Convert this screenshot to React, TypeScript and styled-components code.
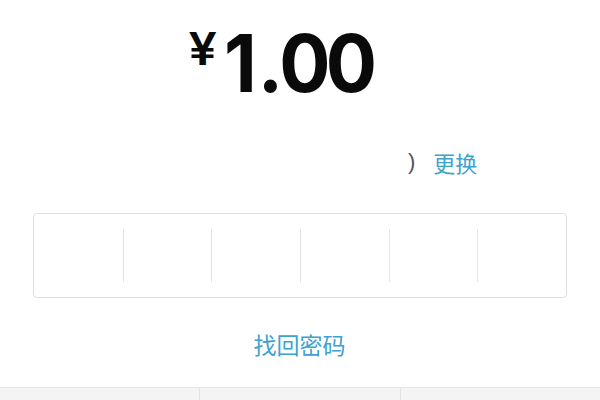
import React from 'react';
import styled, { createGlobalStyle } from 'styled-components';

const GlobalStyle = createGlobalStyle`
  html, body {
    margin: 0;
    padding: 0;
    background: #ffffff;
  }
  body {
    font-family: 'Liberation Sans', 'Noto Sans CJK SC', sans-serif;
  }
`;

const Page = styled.div`
  display: flex;
  flex-direction: column;
  height: 400px;
  overflow: hidden;
  background: #ffffff;
`;

const AmountRow = styled.div`
  display: flex;
  align-items: flex-start;
  padding: 23px 0 0 190px;
  height: 80px;
  color: #0a0a0a;
  font-family: Inter, 'Liberation Sans', sans-serif;
`;

const Yen = styled.span`
  font-size: 45px;
  line-height: 44px;
  font-weight: 600;
  margin-top: 4px;
  margin-right: 9px;
  transform: scaleX(1.12);
`;

const Figure = styled.span`
  display: inline-block;
  font-size: 80px;
  line-height: 80px;
  font-weight: 700;
  letter-spacing: -5px;
  transform: scaleX(0.95);
  transform-origin: left center;
`;

const Dot = styled.span`
  margin: 0 1px 0 6px;
`;

const HintRow = styled.div`
  display: flex;
  align-items: center;
  margin-top: 48px;
  padding-left: 408px;
  height: 22px;
  font-size: 22px;
  line-height: 22px;
`;

const Bracket = styled.span`
  color: #555555;
  margin-right: 18px;
  font-family: 'Liberation Sans', sans-serif;
`;

const Link = styled.span<{ $size?: number }>`
  color: #3ea2cf;
  font-family: 'Noto Sans CJK SC', sans-serif;
  font-size: ${(props) => props.$size ?? 22}px;
`;

const PinBox = styled.div`
  display: grid;
  grid-template-columns: repeat(6, 1fr);
  margin: 40px 33px 0;
  height: 83px;
  border: 1px solid #dfdfdf;
  border-radius: 4px;
`;

const Cell = styled.div`
  display: flex;
  padding: 15px 0;
`;

const Slot = styled.div<{ $divided: boolean }>`
  flex: 1;
  border-left: ${(props) => (props.$divided ? '1px solid #e4e4e4' : 'none')};
`;

const ForgotRow = styled.div`
  display: flex;
  justify-content: center;
  margin-top: 34px;
  padding-right: 1px;
  line-height: 24px;
`;

const Keyboard = styled.div`
  display: grid;
  grid-template-columns: 199px 201px 1fr;
  margin-top: auto;
  height: 12px;
  background: #f4f4f4;
  border-top: 1px solid #e6e6e6;
`;

const Key = styled.div<{ $divided: boolean }>`
  border-left: ${(props) => (props.$divided ? '1px solid #e2e2e2' : 'none')};
`;

const App = () => {
  const cells = [0, 1, 2, 3, 4, 5];
  return (
    <>
      <GlobalStyle />
      <Page>
        <AmountRow>
          <Yen>¥</Yen>
          <Figure>
            1<Dot>.</Dot>00
          </Figure>
        </AmountRow>
        <HintRow>
          <Bracket>)</Bracket>
          <Link>更换</Link>
        </HintRow>
        <PinBox>
          {cells.map((i) => (
            <Cell key={i}>
              <Slot $divided={i > 0} />
            </Cell>
          ))}
        </PinBox>
        <ForgotRow>
          <Link $size={23}>找回密码</Link>
        </ForgotRow>
        <Keyboard>
          <Key $divided={false} />
          <Key $divided />
          <Key $divided />
        </Keyboard>
      </Page>
    </>
  );
};

export default App;
